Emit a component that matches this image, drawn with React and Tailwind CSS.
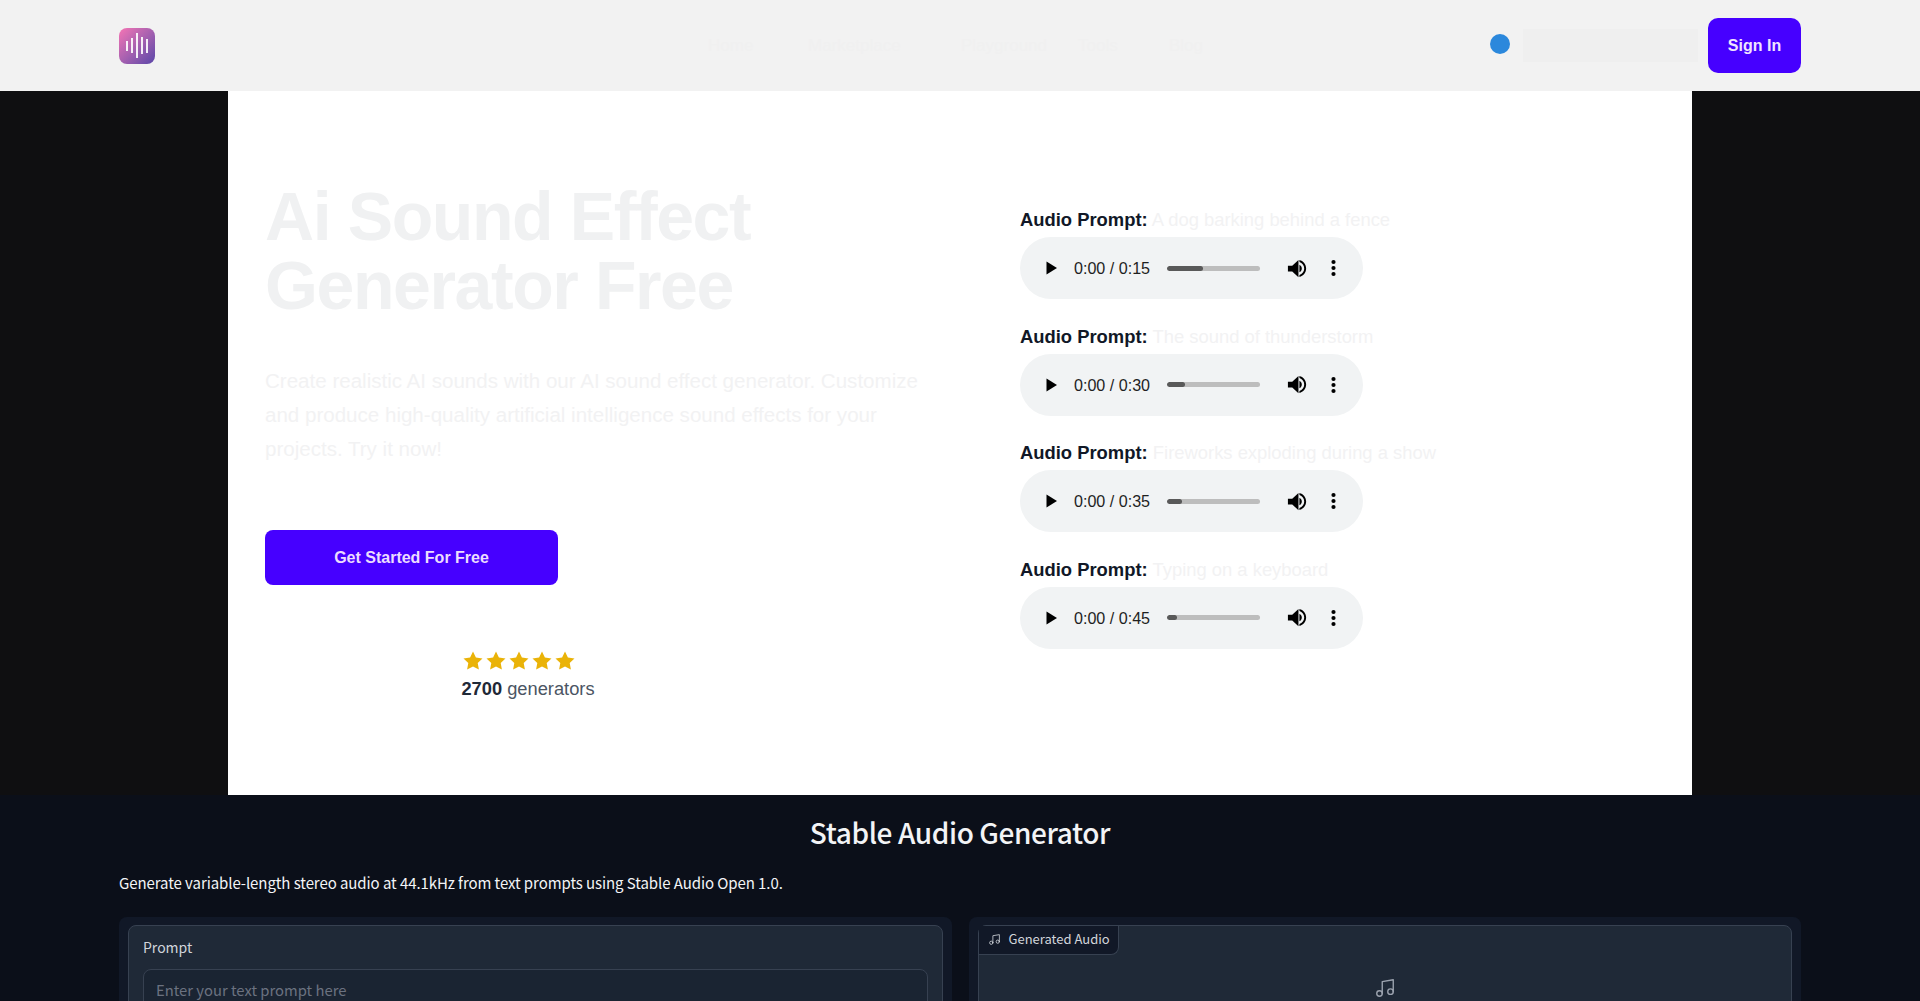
import { Music } from 'lucide-react';

const prompts = [
  { text: 'A dog barking behind a fence', time: '0:15', fill: 'w-[36px]' },
  { text: 'The sound of thunderstorm', time: '0:30', fill: 'w-[18px]' },
  { text: 'Fireworks exploding during a show', time: '0:35', fill: 'w-[15px]' },
  { text: 'Typing on a keyboard', time: '0:45', fill: 'w-[10px]' },
];

const navItems = [
  { label: 'Home', width: 'w-[100px]' },
  { label: 'Marketplace', width: 'w-[153px]' },
  { label: 'Playground', width: 'w-[117px]' },
  { label: 'Tools', width: 'w-[91px]' },
  { label: 'Blog', width: 'w-[50px]' },
];

function AudioPlayer({ time, fill }) {
  return (
    <div className="mt-[4px] flex h-[62px] w-[343px] items-center rounded-[31px] bg-[#f1f3f4] text-[#1f1f1f]">
      <svg className="ml-[25px] h-[14px] w-[13px]" viewBox="0 0 12 14" fill="#000">
        <path d="M1 0.5 L11.5 7 L1 13.5 Z" />
      </svg>
      <span className="ml-[16px] w-[75px] whitespace-nowrap text-[16.100px]">0:00 / {time}</span>
      <div className="ml-[18px] h-[5px] w-[93px] overflow-hidden rounded-full bg-[#bdbdbd]">
        <div className={`h-full rounded-full bg-[#595959] ${fill}`} />
      </div>
      <svg className="ml-[26px] h-[23px] w-[23px]" viewBox="0 0 24 24" fill="#000">
        <path d="M2 9v6h4.500L13 21V3L6.500 9H2zm14.500 3c0-1.800-1-3.300-2.500-4v8c1.500-.7 2.500-2.200 2.500-4zM14 3.200v2.100c2.900.9 5 3.500 5 6.700s-2.100 5.800-5 6.700v2.100c4-.9 7-4.500 7-8.800s-3-7.900-7-8.800z" />
      </svg>
      <svg className="ml-[22px] h-[18px] w-[5px]" viewBox="0 0 5 18" fill="#000">
        <circle cx="2.500" cy="3" r="2.100" />
        <circle cx="2.500" cy="9" r="2.100" />
        <circle cx="2.500" cy="15" r="2.100" />
      </svg>
    </div>
  );
}

function Star() {
  return (
    <svg className="h-[20px] w-[20px]" viewBox="0 0 20 20" fill="#eab308">
      <path d="M10 .6l2.900 6 6.600.9-4.800 4.600 1.200 6.500L10 15.500l-5.900 3.100 1.200-6.500L.5 7.500l6.600-.9z" />
    </svg>
  );
}

export default function App() {
  return (
    <div className="h-[1001px] overflow-hidden bg-[#0b0f19] font-['Liberation_Sans',Arial,sans-serif]">
      <header className="flex h-[91px] items-center bg-[#f2f2f2] pl-[119px] pr-[119px]">
        <div className="flex h-[36px] w-[36px] items-center justify-center gap-[3px] rounded-[8px] bg-gradient-to-br from-[#f674b4] to-[#5b45a8]">
          <span className="h-[10px] w-[2px] bg-white/90" />
          <span className="h-[15px] w-[2px] bg-white/90" />
          <span className="h-[25px] w-[2px] bg-white/90" />
          <span className="h-[17px] w-[2px] bg-white/90" />
          <span className="h-[14px] w-[2px] bg-white/90" />
        </div>
        <nav className="ml-[553px] flex text-[17px] text-[#f0f0f0]">
          {navItems.map((item) => (
            <span key={item.label} className={item.width}>{item.label}</span>
          ))}
        </nav>
        <div className="ml-auto flex items-center">
          <div className="mb-[3px] h-[20px] w-[20px] rounded-full bg-[#2b88dc]" />
          <div className="ml-[13px] h-[33px] w-[175px] bg-[#efefef]" />
          <button className="ml-[10px] h-[55px] w-[93px] rounded-[10px] bg-[#4600ff] text-[16px] font-bold text-[#f0e4ff]">
            Sign In
          </button>
        </div>
      </header>

      <section className="flex h-[704px] justify-center bg-[#0f0f11]">
        <div className="flex w-[1464px] bg-white pl-[37px]">
          <div className="w-[755px] pt-[91px]">
            <h1 className="text-[68px] font-bold leading-[69px] tracking-[-1.400px] text-[#f0f1f2]">
              Ai Sound Effect
              <br />
              Generator Free
            </h1>
            <p className="mt-[44px] w-[680px] text-[20.550px] leading-[34px] text-[#f2f2f3]">
              Create realistic AI sounds with our AI sound effect generator. Customize and produce high-quality artificial intelligence sound effects for your projects. Try it now!
            </p>
            <button className="mt-[64px] h-[55px] w-[293px] rounded-[8px] bg-[#4600ff] text-[16px] font-bold text-[#ecdcff]">
              Get Started For Free
            </button>
            <div className="mt-[66px] flex w-[526px] flex-col items-center">
              <div className="mr-[18px] flex gap-[3px]">
                <Star />
                <Star />
                <Star />
                <Star />
                <Star />
              </div>
              <p className="mt-[4px] text-[18.300px] leading-[28px] text-[#4b5563]">
                <b className="text-[#1f2937]">2700</b> generators
              </p>
            </div>
          </div>
          <div className="pt-[116px]">
            {prompts.map((p) => (
              <div key={p.time} className="mb-[24.600px]">
                <p className="h-[26px] whitespace-nowrap text-[18.400px] leading-[26px] text-[#f2f2f3]">
                  <b className="text-[#111827]">Audio Prompt:</b> {p.text}
                </p>
                <AudioPlayer time={p.time} fill={p.fill} />
              </div>
            ))}
          </div>
        </div>
      </section>

      <section className="px-[119px] font-['Noto_Sans_CJK_SC','Noto_Sans',sans-serif] text-[#f3f4f6]">
        <h2 className="pt-[17px] text-center text-[28px] font-medium leading-[40px] tracking-[-0.400px]">Stable Audio Generator</h2>
        <p className="mt-[19px] text-[15px] leading-[24px] tracking-[-0.080px]">
          Generate variable-length stereo audio at 44.1kHz from text prompts using Stable Audio Open 1.0.
        </p>
        <div className="mt-[22px] grid grid-cols-2 gap-[17px]">
          <div className="h-[200px] rounded-t-[8px] bg-[#111827] p-[9px] pt-[8px]">
            <div className="h-full rounded-t-[8px] border border-[#374151] bg-[#1f2937] px-[14px] pt-[9px]">
              <label className="block text-[14px] leading-[24px] text-[#d1d5db]">Prompt</label>
              <div className="mt-[10px] h-[80px] rounded-[8px] border border-[#374151] bg-[#1a2432] px-[12px] py-[8px] text-[14.800px] leading-[24px] text-[#6b7280]">
                Enter your text prompt here
              </div>
            </div>
          </div>
          <div className="h-[200px] rounded-t-[8px] bg-[#111827] p-[9px] pt-[8px]">
            <div className="h-full rounded-t-[8px] border border-[#374151] bg-[#1f2937]">
              <div className="flex h-[29px] w-[140px] items-center gap-[8px] rounded-br-[8px] border-b border-r border-[#374151] bg-[#111827] pb-[2px] pl-[9px] text-[13px] text-[#d1d5db]">
                <Music className="h-[13px] w-[13px]" strokeWidth={1.500} />
                Generated Audio
              </div>
              <div className="flex justify-center pt-[22px]">
                <Music className="h-[22px] w-[22px] text-[#9ca3af]" strokeWidth={1.500} />
              </div>
            </div>
          </div>
        </div>
      </section>
    </div>
  );
}
